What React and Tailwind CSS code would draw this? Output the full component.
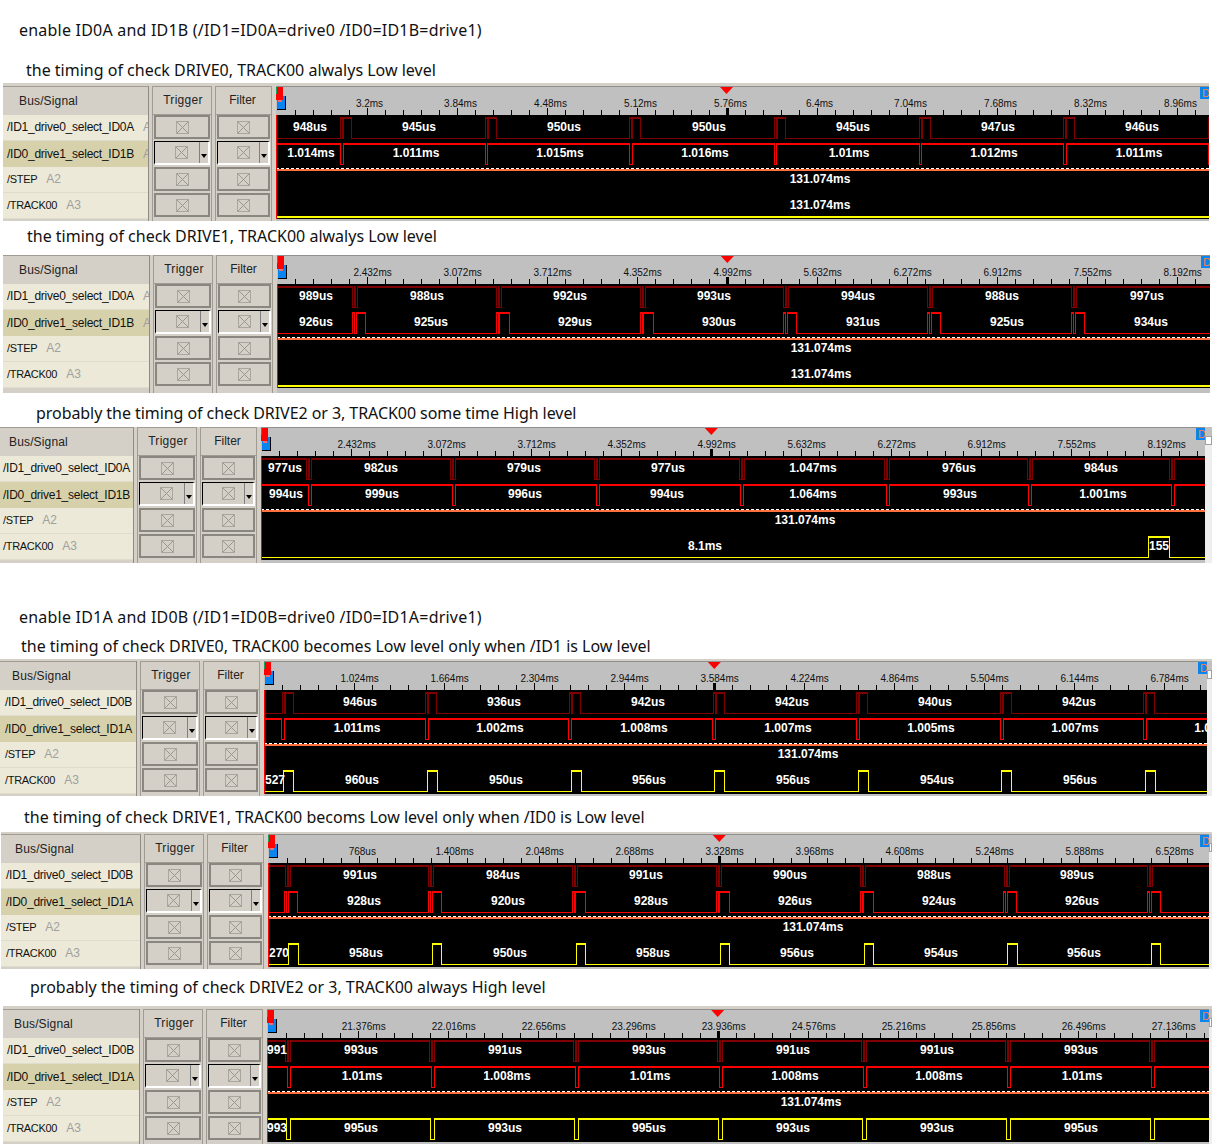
import React from "react";

const rep = (a, period, n, offs) => {
  const out = [];
  for (let k = 0; k < n; k++) for (const o of offs) out.push(a + period * k + o);
  return out;
};
const fromList = (list, offs) => list.flatMap((a) => offs.map((o) => a + o));

const DBL = [0, 2, 3, 5];
const SGL = [0, 2.5];
const PLS = [0, 2, 3, 11];
const PLS13 = [0, 2, 3.5, 13];

const names = (a, b, a2 = "A", b2 = "A") => [
  [a, a2],
  [b, b2],
  ["/STEP", "A2"],
  ["/TRACK00", "A3"],
];

const panels = [
  {
    c: 127, x0: 276, end: 1209, major: 366.5, mbox: 1200,
    wrap: "ml-[3px] mr-[3px]", band: "h-[3px]", sig: "w-[146px] pb-[2px]", pb: "pb-[2px]", head: "pl-[16px]", name: "pl-[4px]",
    ticks: ["3.2ms", "3.84ms", "4.48ms", "5.12ms", "5.76ms", "6.4ms", "7.04ms", "7.68ms", "8.32ms", "8.96ms"],
    signals: names("/ID1_drive0_select_ID0A", "/ID0_drive1_select_ID1B"),
    rows: [
      { high: false, edges: rep(340.1, 144.6, 7, PLS) },
      { high: true, edges: rep(340.1, 144.6, 7, SGL) },
      null,
      { high: false, edges: [], lowW: 2 },
    ],
    labels: [
      [[310, "948us"], [419, "945us"], [564, "950us"], [709, "950us"], [853, "945us"], [998, "947us"], [1142, "946us"]],
      [[311, "1.014ms"], [416, "1.011ms"], [560, "1.015ms"], [705, "1.016ms"], [849, "1.01ms"], [994, "1.012ms"], [1139, "1.011ms"]],
      [[820, "131.074ms"]],
      [[820, "131.074ms"]],
    ],
  },
  {
    c: 296, x0: 277, end: 1210, major: 367.3, mbox: 1201,
    wrap: "ml-[3px] mr-[2px]", band: "", sig: "w-[147px] pb-[5px]", pb: "pb-[5px]", head: "pl-[16px]", name: "pl-[4px]",
    ticks: ["2.432ms", "3.072ms", "3.712ms", "4.352ms", "4.992ms", "5.632ms", "6.272ms", "6.912ms", "7.552ms", "8.192ms"],
    signals: names("/ID1_drive0_select_ID0A", "/ID0_drive1_select_ID1B"),
    rows: [
      { high: true, edges: rep(352, 143.8, 6, DBL) },
      { high: false, edges: rep(352, 143.8, 6, PLS13) },
      null,
      { high: false, edges: [], lowW: 2 },
    ],
    labels: [
      [[316, "989us"], [427, "988us"], [570, "992us"], [714, "993us"], [858, "994us"], [1002, "988us"], [1147, "997us"]],
      [[316, "926us"], [431, "925us"], [575, "929us"], [719, "930us"], [863, "931us"], [1007, "925us"], [1151, "934us"]],
      [[821, "131.074ms"]],
      [[821, "131.074ms"]],
    ],
  },
  {
    c: 468, x0: 261, end: 1205, major: 351.3, mbox: 1196, strip: "w-[7px]",
    wrap: "", band: "", sig: "w-[134px] pb-[3px]", pb: "pb-[3px]", head: "pl-[9px]", name: "pl-[3px]",
    ticks: ["2.432ms", "3.072ms", "3.712ms", "4.352ms", "4.992ms", "5.632ms", "6.272ms", "6.912ms", "7.552ms", "8.192ms"],
    signals: names("/ID1_drive0_select_ID0A", "/ID0_drive1_select_ID1B"),
    rows: [
      { high: true, edges: fromList([306, 450, 594, 739, 884.3, 1026.7, 1169.3], DBL) },
      { high: true, edges: fromList([308, 452, 596, 740, 886, 1028, 1171], SGL) },
      null,
      { high: false, edges: [1148, 1169] },
    ],
    labels: [
      [[285, "977us"], [381, "982us"], [524, "979us"], [668, "977us"], [813, "1.047ms"], [959, "976us"], [1101, "984us"]],
      [[286, "994us"], [382, "999us"], [525, "996us"], [667, "994us"], [813, "1.064ms"], [960, "993us"], [1103, "1.001ms"]],
      [[805, "131.074ms"]],
      [[705, "8.1ms"], [1159, "155"]],
    ],
  },
  {
    c: 702, x0: 264, end: 1207, major: 354.3, mbox: 1198, strip: "w-[5px]",
    wrap: "", band: "h-[2px]", sig: "w-[137px] pb-[2px]", pb: "pb-[2px]", head: "pl-[12px]", name: "pl-[5px]",
    ticks: ["1.024ms", "1.664ms", "2.304ms", "2.944ms", "3.584ms", "4.224ms", "4.864ms", "5.504ms", "6.144ms", "6.784ms"],
    signals: names("/ID1_drive0_select_ID0B", "/ID0_drive1_select_ID1A"),
    rows: [
      { high: false, edges: rep(281.7, 143.6, 7, PLS) },
      { high: true, edges: rep(281, 143.7, 7, [0, 3]) },
      null,
      { high: false, edges: rep(283.3, 143.6, 7, [0, 10]) },
    ],
    labels: [
      [[360, "946us"], [504, "936us"], [648, "942us"], [792, "942us"], [935, "940us"], [1079, "942us"]],
      [[357, "1.011ms"], [500, "1.002ms"], [644, "1.008ms"], [788, "1.007ms"], [931, "1.005ms"], [1075, "1.007ms"], [1218, "1.007ms"]],
      [[808, "131.074ms"]],
      [[275, "527"], [362, "960us"], [506, "950us"], [649, "956us"], [793, "956us"], [937, "954us"], [1080, "956us"]],
    ],
  },
  {
    c: 875, x0: 268, end: 1209, major: 359.3, mbox: 1200, strip: "w-[3px]",
    wrap: "ml-[1px]", band: "h-[2px]", sig: "w-[140px] pb-[2px]", pb: "pb-[2px]", head: "pl-[14px]", name: "pl-[5px]",
    ticks: ["768us", "1.408ms", "2.048ms", "2.688ms", "3.328ms", "3.968ms", "4.608ms", "5.248ms", "5.888ms", "6.528ms"],
    signals: names("/ID1_drive0_select_ID0B", "/ID0_drive1_select_ID1A"),
    rows: [
      { high: true, edges: rep(284.5, 143.8, 7, DBL) },
      { high: false, edges: rep(284.3, 143.8, 7, PLS13) },
      null,
      { high: false, edges: rep(288.3, 143.8, 7, [0, 9.3]) },
    ],
    labels: [
      [[360, "991us"], [503, "984us"], [646, "991us"], [790, "990us"], [934, "988us"], [1077, "989us"]],
      [[364, "928us"], [508, "920us"], [651, "928us"], [795, "926us"], [939, "924us"], [1082, "926us"]],
      [[813, "131.074ms"]],
      [[279, "270"], [366, "958us"], [510, "950us"], [653, "958us"], [797, "956us"], [941, "954us"], [1084, "956us"]],
    ],
  },
  {
    c: 1050, x0: 267, end: 1209, major: 357.7, mbox: 1200, strip: "w-[3px]",
    wrap: "ml-[3px]", band: "h-[3px]", sig: "w-[137px] pb-[2px]", pb: "pb-[2px]", head: "pl-[11px]", name: "pl-[4px]",
    ticks: ["21.376ms", "22.016ms", "22.656ms", "23.296ms", "23.936ms", "24.576ms", "25.216ms", "25.856ms", "26.496ms", "27.136ms"],
    signals: names("/ID1_drive0_select_ID0B", "/ID0_drive1_select_ID1A"),
    rows: [
      { high: true, edges: rep(285, 144, 7, DBL) },
      { high: true, edges: rep(287.3, 144, 7, SGL) },
      null,
      { high: true, edges: rep(285.5, 144, 7, [0, 4]) },
    ],
    labels: [
      [[277, "991"], [361, "993us"], [505, "991us"], [649, "993us"], [793, "991us"], [937, "991us"], [1081, "993us"]],
      [[362, "1.01ms"], [507, "1.008ms"], [650, "1.01ms"], [795, "1.008ms"], [939, "1.008ms"], [1082, "1.01ms"]],
      [[811, "131.074ms"]],
      [[277, "993"], [361, "995us"], [505, "993us"], [649, "995us"], [793, "993us"], [937, "993us"], [1081, "995us"]],
    ],
  },
];

const px = (v) => Math.round(v) + 0.5;

function Trace({ row, color, rc, x0, end }) {
  const yh = rc - 10 + 0.5;
  const yl = rc + 11 + 0.5;
  const edges = row.edges.filter((e) => e < end);
  let level = row.high;
  let d = `M${x0} ${level ? yh : yl}`;
  let from = x0;
  const tops = [];
  for (const raw of edges) {
    const e = px(raw);
    if (level) tops.push([from, e]);
    d += `H${e}V${level ? yl : yh}`;
    level = !level;
    from = e;
  }
  if (level) tops.push([from, end]);
  d += `H${end}`;
  return (
    <g>
      <path d={d} fill="none" stroke={color} strokeWidth={row.lowW || 1} />
      {tops.map(([a, b], i) => (
        <rect key={i} x={a - 0.5} y={yh - 0.5} width={b - a + 1} height={2} fill={color} />
      ))}
    </g>
  );
}

function Wave({ p }) {
  const { c, x0, end, major, ticks } = p;
  const W = end - x0;
  const top = c - 41;
  const tickXs = [];
  for (let x = major - 72; x < end - 4; x += 18) tickXs.push(x);
  const rowC = [c, c + 26, c + 52, c + 78];
  const colors = ["#800000", "#ff0000", null, "#ffff00"];
  const fontProps = { fontFamily: '"Liberation Sans", Arial, sans-serif' };
  return (
    <svg width={W} height={133} viewBox={`${x0} ${top} ${W} 133`} className="block" shapeRendering="crispEdges" {...fontProps}>
      <rect x={x0} y={top} width={W} height={1} fill="#8f8f8f" />
      <rect x={x0} y={top + 1} width={W} height={28} fill="#c0c0c0" />
      <rect x={x0} y={c - 12} width={W} height={104} fill="#000000" />
      {tickXs.map((x, i) => {
        const isMajor = (i - 4) % 5 === 0;
        return <rect key={i} x={Math.round(x)} y={isMajor ? c - 19 : c - 17} width={1} height={isMajor ? 7 : 5} fill="#000000" />;
      })}
      <rect x={Math.round(major + 360) - 1} y={c - 19} width={3} height={7} fill="#000000" />
      {ticks.map((t, i) => (
        <text key={t} x={major + 90 * i + (t.length >= 8 ? 6 : t.length === 7 ? 5.3 : t.length === 6 ? 4 : 3)} y={c - 20} textAnchor="middle" fontSize="10" fill="#111111" shapeRendering="auto">
          {t}
        </text>
      ))}
      <polygon points={`${major + 353.5},${c - 40} ${major + 366.5},${c - 40} ${major + 360},${c - 33}`} fill="#ff0000" shapeRendering="auto" />

      <rect x={x0 + 1} y={c - 31} width={9} height={14} fill="#000000" />
      <rect x={x0 + 1} y={c - 31} width={8} height={13} fill="#0a84f0" />
      <rect x={x0 + 2} y={c - 28} width={4} height={3} fill="#e87070" />
      <rect x={x0} y={c - 40} width={7} height={13} fill="#ff0000" />
      <rect x={x0} y={c - 40} width={1} height={7} fill="#20a060" />
      <rect x={p.mbox} y={c - 40} width={9} height={12} fill="#0a84f0" />
      <text x={p.mbox + 2} y={c - 30} fontSize="11" fill="#ff8040" shapeRendering="auto">D</text>

      {rowC.map((rc, i) =>
        p.rows[i] ? <Trace key={i} row={p.rows[i]} color={colors[i]} rc={rc} x0={x0} end={end} /> : null
      )}
      <rect x={x0} y={rowC[2] - 10} width={W} height={2} fill="#ff7040" />
      <line x1={x0} x2={end} y1={rowC[2] - 10.5} y2={rowC[2] - 10.5} stroke="#ffffff" strokeDasharray="3 2" />
      <rect x={x0} y={c - 12} width={1} height={104} fill="#ff0000" />

      {p.labels.map((row, i) =>
        row.map(([x, t], j) => (
          <text key={j} x={x} y={rowC[i] + 4} textAnchor="middle" fontSize="12" fontWeight="700" fill="#ffffff" shapeRendering="auto">
            {t}
          </text>
        ))
      )}
    </svg>
  );
}

function CrossIcon() {
  return (
    <svg width="13" height="13" viewBox="0 0 13 13" className="block shrink-0">
      <rect x="0.5" y="0.5" width="12" height="12" fill="none" stroke="#7f7c75" strokeDasharray="1 1" />
      <path d="M1 1L12 12M12 1L1 12" stroke="#9a968e" fill="none" />
    </svg>
  );
}

function Cell({ dropdown, pad }) {
  if (dropdown) {
    return (
      <div className="mx-[1px] h-[24px] flex border-l border-t border-l-black border-t-black border-r-2 border-b-2 border-r-white border-b-white">
        <div className={`flex-1 flex items-center justify-center ${pad}`}>
          <CrossIcon />
        </div>
        <div className="w-[9px] border-l border-[#808080] flex items-end justify-center pb-[5px]">
          <span className="block w-0 h-0 border-x-[3px] border-t-[4px] border-x-transparent border-t-black" />
        </div>
      </div>
    );
  }
  return (
    <div className="mx-[1px] h-[24px] flex items-center justify-center border-2 border-[#8a8780]">
      <CrossIcon />
    </div>
  );
}

function Control({ title, width, pad, ml, track }) {
  return (
    <div className={`${width} ${ml} border-x border-[#a09c94]`}>
      <div className={`h-[29px] border-y border-[#a09c94] flex items-center justify-center pb-[2px] text-[12px] ${track} text-[#222222]`}>
        {title}
      </div>
      {[0, 1, 2, 3].map((i) => (
        <div key={i} className="h-[26px]">
          <Cell dropdown={i === 1} pad={pad} />
        </div>
      ))}
    </div>
  );
}

function Panel({ p }) {
  return (
    <div className={`${p.wrap} bg-[#d4d0c8] font-['Liberation_Sans',Arial,sans-serif]`}>
      {p.band ? <div className={p.band} /> : null}
      <div className="flex">
        <div className={`${p.sig} shrink-0 border-r border-[#8f8c85] overflow-hidden`}>
          <div className={`h-[29px] border-t border-[#a09c94] flex items-center ${p.head} text-[12px] tracking-[0.15px] text-[#222222]`}>
            Bus/Signal
          </div>
          {p.signals.map(([name, ch], i) => (
            <div
              key={i}
              className={
                i === 1
                  ? `h-[26px] flex items-center gap-[9px] pb-[1px] whitespace-nowrap bg-[#d6d1ab] ${p.name}`
                  : `h-[26px] flex items-center gap-[9px] pb-[1px] whitespace-nowrap bg-[#ece9d8] border-b border-[#deddcd] ${p.name}`
              }
            >
              <span className={i < 2 ? "text-[12px] tracking-[-0.25px] text-[#111111]" : "text-[11px] tracking-[-0.3px] text-[#111111]"}>{name}</span>
              <span className="text-[12px] text-[#a0a0a0]">{ch}</span>
            </div>
          ))}
        </div>
        <Control title="Trigger" width="w-[60px]" pad="pl-[8px]" ml="ml-[3px]" track="pl-[2px] tracking-[0.3px]" />
        <Control title="Filter" width="w-[57px]" pad="pl-[10px]" ml="ml-[3px]" track="pr-[2px]" />
        <div className={`ml-[4px] flex-1 min-w-0 bg-[#c0c0c0] overflow-hidden ${p.pb}`}>
          <Wave p={p} />
        </div>
        {p.strip ? (
          <div className={`${p.strip} shrink-0 bg-[#c0c0c0] flex flex-col`}>
            <div className="h-[9px]" />
            <div className="h-[9px] bg-white border border-[#a0a0a0]" />
            <div className="flex-1 bg-[#eeeeee]" />
          </div>
        ) : null}
      </div>
    </div>
  );
}

function Heading({ className, children }) {
  return <p className={`h-[24px] leading-[24px] text-[16px] text-[#111111] whitespace-nowrap font-['Noto_Sans',sans-serif] ${className}`}>{children}</p>;
}

export default function App() {
  return (
    <div className="w-[1212px] h-[1148px] bg-white overflow-hidden flow-root">
      <Heading className="mt-[18px] ml-[19px] tracking-[0.21px]">enable ID0A and ID1B (/ID1=ID0A=drive0 /ID0=ID1B=drive1)</Heading>
      <Heading className="mt-[16px] mb-[1px] ml-[26px]">the timing of check DRIVE0, TRACK00 alwalys Low level</Heading>
      <Panel p={panels[0]} />
      <Heading className="mt-[3px] mb-[7px] ml-[27px]">the timing of check DRIVE1, TRACK00 alwalys Low level</Heading>
      <Panel p={panels[1]} />
      <Heading className="mt-[8px] mb-[2px] ml-[36px] tracking-[-0.06px]">probably the timing of check DRIVE2 or 3, TRACK00 some time High level</Heading>
      <Panel p={panels[2]} />
      <Heading className="mt-[42px] ml-[19px] tracking-[0.21px]">enable ID1A and ID0B (/ID1=ID0B=drive0 /ID0=ID1A=drive1)</Heading>
      <Heading className="mt-[5px] mb-[1px] ml-[21px]">the timing of check DRIVE0, TRACK00 becomes Low level only when /ID1 is Low level</Heading>
      <Panel p={panels[3]} />
      <Heading className="mt-[9px] mb-[3px] ml-[24px]">the timing of check DRIVE1, TRACK00 becoms Low level only when /ID0 is Low level</Heading>
      <Panel p={panels[4]} />
      <Heading className="mt-[6px] mb-[7px] ml-[30px]">probably the timing of check DRIVE2 or 3, TRACK00 always High level</Heading>
      <Panel p={panels[5]} />
    </div>
  );
}
